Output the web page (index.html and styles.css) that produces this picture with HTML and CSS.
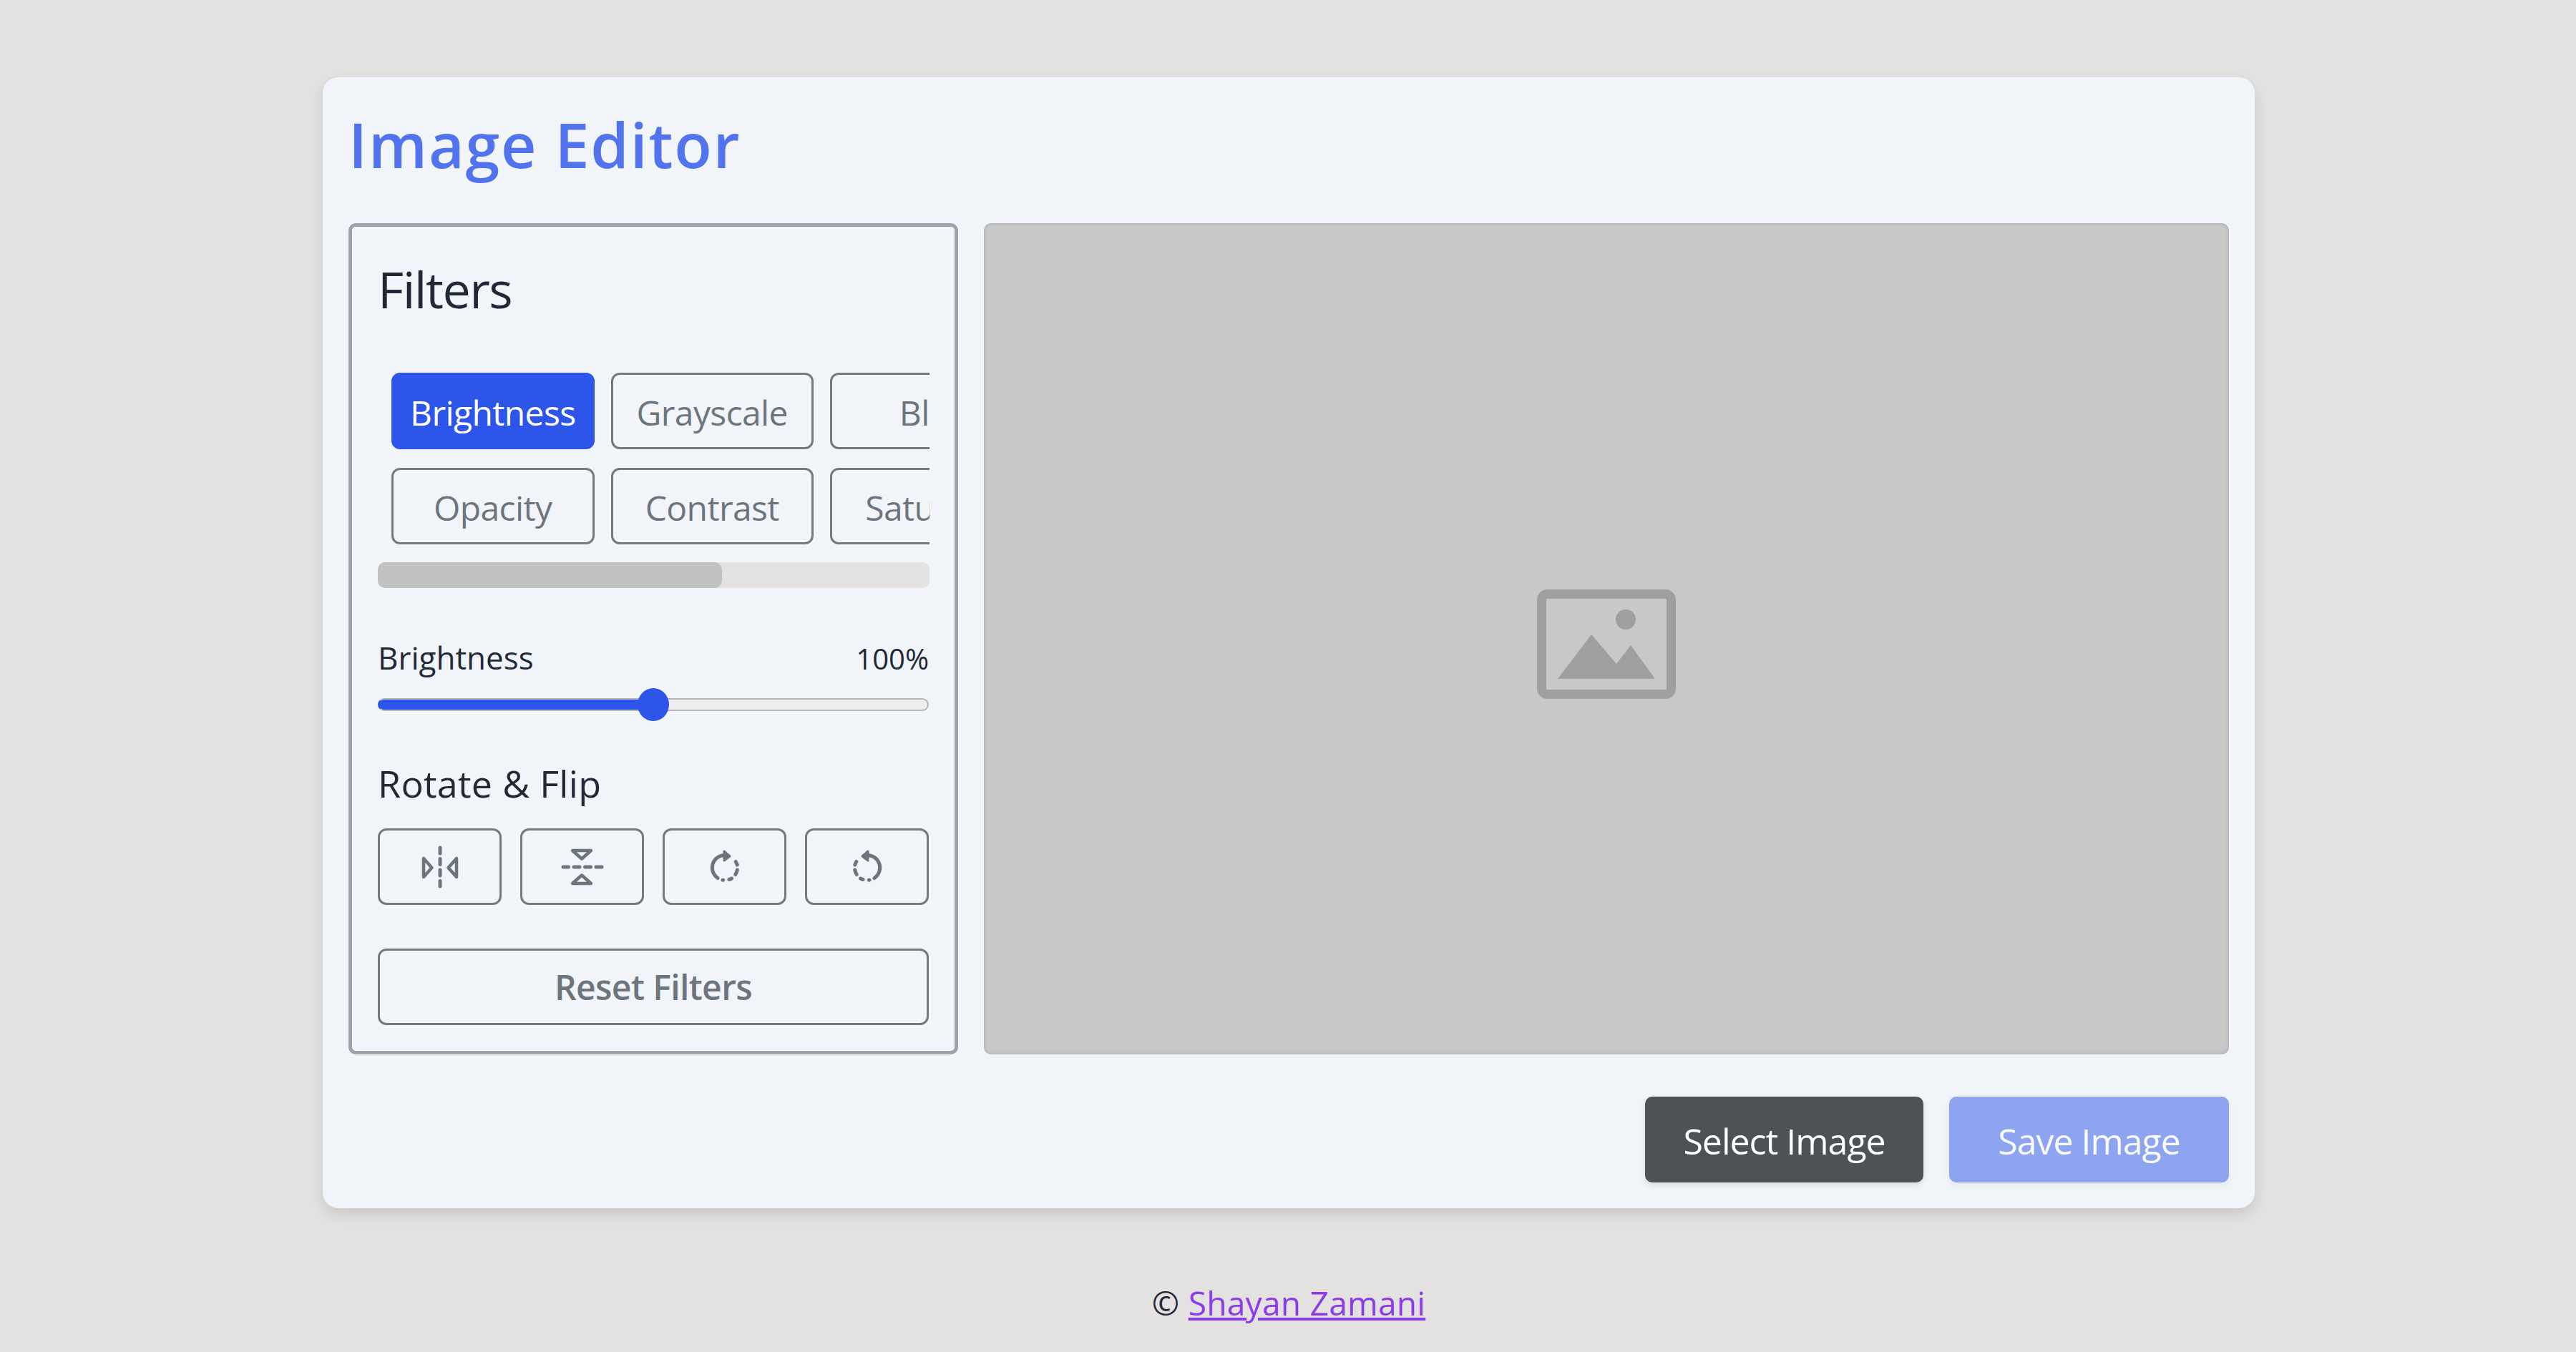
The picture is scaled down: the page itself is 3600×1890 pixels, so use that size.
FILE: index.html
```html
<!DOCTYPE html>
<html lang="en">
<head>
  <meta charset="UTF-8">
  <meta name="viewport" content="width=device-width, initial-scale=1.0">
  <title>Image Editor</title>
  <link rel="stylesheet" href="styles.css">
</head>
<body>
  <div class="container">
    <h1>Image Editor</h1>

    <div class="workspace">
      <section class="panel">
        <h2>Filters</h2>

        <div class="filter-scroll">
          <div class="filter-grid">
            <button type="button" class="btn active">Brightness</button>
            <button type="button" class="btn">Grayscale</button>
            <button type="button" class="btn">Blur</button>
            <button type="button" class="btn">Sepia</button>
            <button type="button" class="btn">Opacity</button>
            <button type="button" class="btn">Contrast</button>
            <button type="button" class="btn">Saturate</button>
            <button type="button" class="btn">Invert</button>
          </div>
        </div>
        <div class="scroll-track">
          <div class="scroll-thumb"></div>
        </div>

        <div class="slider-head">
          <label for="filterRange">Brightness</label>
          <span class="slider-value">100%</span>
        </div>
        <input type="range" id="filterRange" min="0" max="200" value="100">

        <h3>Rotate &amp; Flip</h3>
        <div class="rotate-row">
          <button type="button" class="btn" aria-label="Flip horizontal">
            <svg class="tool-icon" viewBox="0 0 60 60"><use href="#iconFlip"/></svg>
          </button>
          <button type="button" class="btn" aria-label="Flip vertical">
            <svg class="tool-icon turned" viewBox="0 0 60 60"><use href="#iconFlip"/></svg>
          </button>
          <button type="button" class="btn" aria-label="Rotate right">
            <svg class="tool-icon" viewBox="0 0 60 60"><use href="#iconRotate"/></svg>
          </button>
          <button type="button" class="btn" aria-label="Rotate left">
            <svg class="tool-icon mirrored" viewBox="0 0 60 60"><use href="#iconRotate"/></svg>
          </button>
        </div>

        <button type="button" class="btn reset">Reset Filters</button>
      </section>

      <section class="preview">
        <svg class="preview-icon" viewBox="0 0 194 153">
          <rect x="6.5" y="6.5" width="181" height="140" rx="8" fill="none" stroke="currentColor" stroke-width="13"/>
          <circle cx="124" cy="42" r="14" fill="currentColor"/>
          <polygon points="29,125 76,63 111,104 131,78 165,125" fill="currentColor"/>
        </svg>
      </section>
    </div>

    <div class="actions">
      <button type="button" class="action select">Select Image</button>
      <button type="button" class="action save" disabled>Save Image</button>
    </div>
  </div>

  <footer class="credit">© <a href="#">Shayan Zamani</a></footer>

  <!-- shared icon shapes -->
  <svg class="icon-defs" aria-hidden="true">
    <symbol id="iconFlip" viewBox="0 0 60 60">
      <path d="M30 3V57" fill="none" stroke="currentColor" stroke-width="5" stroke-linecap="round" stroke-dasharray="8 7.5"/>
      <path d="M7 18V44L18.5 31Z M53 18V44L41.5 31Z" fill="none" stroke="currentColor" stroke-width="4.5" stroke-linejoin="round"/>
    </symbol>
    <symbol id="iconRotate" viewBox="0 0 60 60">
      <path d="M20 45.5A17.5 17.5 0 0 1 30 13.5" fill="none" stroke="currentColor" stroke-width="5" stroke-linecap="round"/>
      <path d="M45.2 22.5A17.5 17.5 0 0 1 47.2 27M47.3 34A17.5 17.5 0 0 1 44.8 40.5M39.5 46A17.5 17.5 0 0 1 36 47.5M27 48.2L27.6 48.3" fill="none" stroke="currentColor" stroke-width="5" stroke-linecap="round"/>
      <path d="M29 8L37 15L29 21Z" fill="currentColor" stroke="currentColor" stroke-width="3" stroke-linejoin="round"/>
    </symbol>
  </svg>
</body>
</html>
```

FILE: styles.css
```css
* {
  box-sizing: border-box;
}
body {
  font-family: "Open Sans", "Noto Sans", sans-serif;
  margin: 0;
  padding-left: 2px;
  background-color: #e3e2e0;
  color: #212936;
}
.container {
  width: 2700px;
  margin: 108px auto 0;
  padding: 36px;
  background: #f1f5fa;
  border-radius: 22px;
  box-shadow: 0 8px 20px rgba(0, 0, 0, 0.12);
}
h1 {
  margin: 0 0 24px;
  height: 144px;
  font-size: 86px;
  line-height: 116px;
  font-weight: 600;
  letter-spacing: 1.8px;
  color: #5273ee;
}
h2 {
  margin: 0 0 67px;
  font-size: 70px;
  line-height: 100px;
  font-weight: 400;
  letter-spacing: -1.5px;
}
h3 {
  margin: 0 0 28px;
  font-size: 52px;
  line-height: 70px;
  font-weight: 400;
  letter-spacing: 0.3px;
}
.workspace {
  display: flex;
  gap: 36px;
  height: 1162px;
}
.panel {
  width: 852px;
  padding: 37px 36px;
  border: 5px solid #9ba4ae;
  border-radius: 10px;
}
.preview {
  flex: 1;
  display: flex;
  align-items: center;
  justify-content: center;
  padding-top: 14px;
  background: #c8c8c8;
  border-radius: 10px;
  box-shadow: inset 0 0 5px rgba(90, 100, 120, 0.35);
  color: #9f9f9f;
}
.preview-icon {
  width: 194px;
  height: 153px;
}

/* filter buttons, clipped sideways inside the panel */
.filter-scroll {
  overflow: hidden;
  margin-right: -1px;
}
.filter-grid {
  display: grid;
  grid-template-columns: repeat(4, 283.5px);
  gap: 26px 23px;
  width: 1236px;
  padding: 0 0 25px 19px;
}
.filter-grid .btn {
  padding-top: 4px;
}
.scroll-track {
  height: 36px;
  margin-right: -1px;
  background: #e3e2e0;
  border-radius: 10px;
}
.scroll-thumb {
  width: 481px;
  height: 100%;
  background: #c2c2c2;
  border-radius: 10px;
}
.btn {
  height: 107px;
  padding: 0;
  background: transparent;
  border: 3px solid #737a80;
  border-radius: 12px;
  font-family: inherit;
  font-size: 48px;
  letter-spacing: -0.6px;
  color: #6c757d;
}
.btn.active {
  background: #2d55ea;
  border-color: #2d55ea;
  color: #fff;
}
.slider-head {
  display: flex;
  justify-content: space-between;
  align-items: baseline;
  margin-top: 67px;
  font-size: 44px;
  line-height: 60px;
}
.slider-value {
  font-size: 40px;
}
input[type="range"] {
  display: block;
  -webkit-appearance: none;
  appearance: none;
  width: 100%;
  height: 46px;
  margin: 11px 0 52px;
  background: transparent;
}
input[type="range"]::-webkit-slider-runnable-track {
  height: 18px;
  background: linear-gradient(to right, #2d55ea 50%, #eeeeee 50%);
  border: 2px solid #b5b5b5;
  border-left-color: #2d55ea;
  border-radius: 9px;
}
input[type="range"]::-webkit-slider-thumb {
  -webkit-appearance: none;
  width: 44px;
  height: 46px;
  margin-top: -16px;
  background: #2d55ea;
  border-radius: 50%;
}
.rotate-row {
  display: grid;
  grid-template-columns: repeat(4, 1fr);
  gap: 26px;
}
.tool-icon {
  display: block;
  width: 60px;
  height: 60px;
  margin: 0 auto;
}
.tool-icon.turned {
  transform: rotate(90deg);
}
.tool-icon.mirrored {
  transform: scaleX(-1);
}
.reset {
  display: block;
  width: 100%;
  margin-top: 61px;
  font-weight: 600;
}
.actions {
  display: flex;
  justify-content: flex-end;
  gap: 36px;
  margin-top: 59px;
}
.action {
  height: 120px;
  padding: 4px 0 0;
  border: none;
  border-radius: 10px;
  font-family: inherit;
  font-size: 50px;
  letter-spacing: -1px;
  color: #fff;
  box-shadow: 0 4px 8px rgba(0, 0, 0, 0.1);
}
.select {
  width: 389px;
  background: #4e5257;
}
.save {
  width: 391px;
  background: #2d55ea;
  opacity: 0.5;
}
.credit {
  margin-top: 100px;
  text-align: center;
  font-size: 46px;
  line-height: 64px;
  letter-spacing: 0.3px;
}
.credit a {
  color: #8b3ce8;
  font-weight: 500;
}
.icon-defs {
  display: none;
}
```
